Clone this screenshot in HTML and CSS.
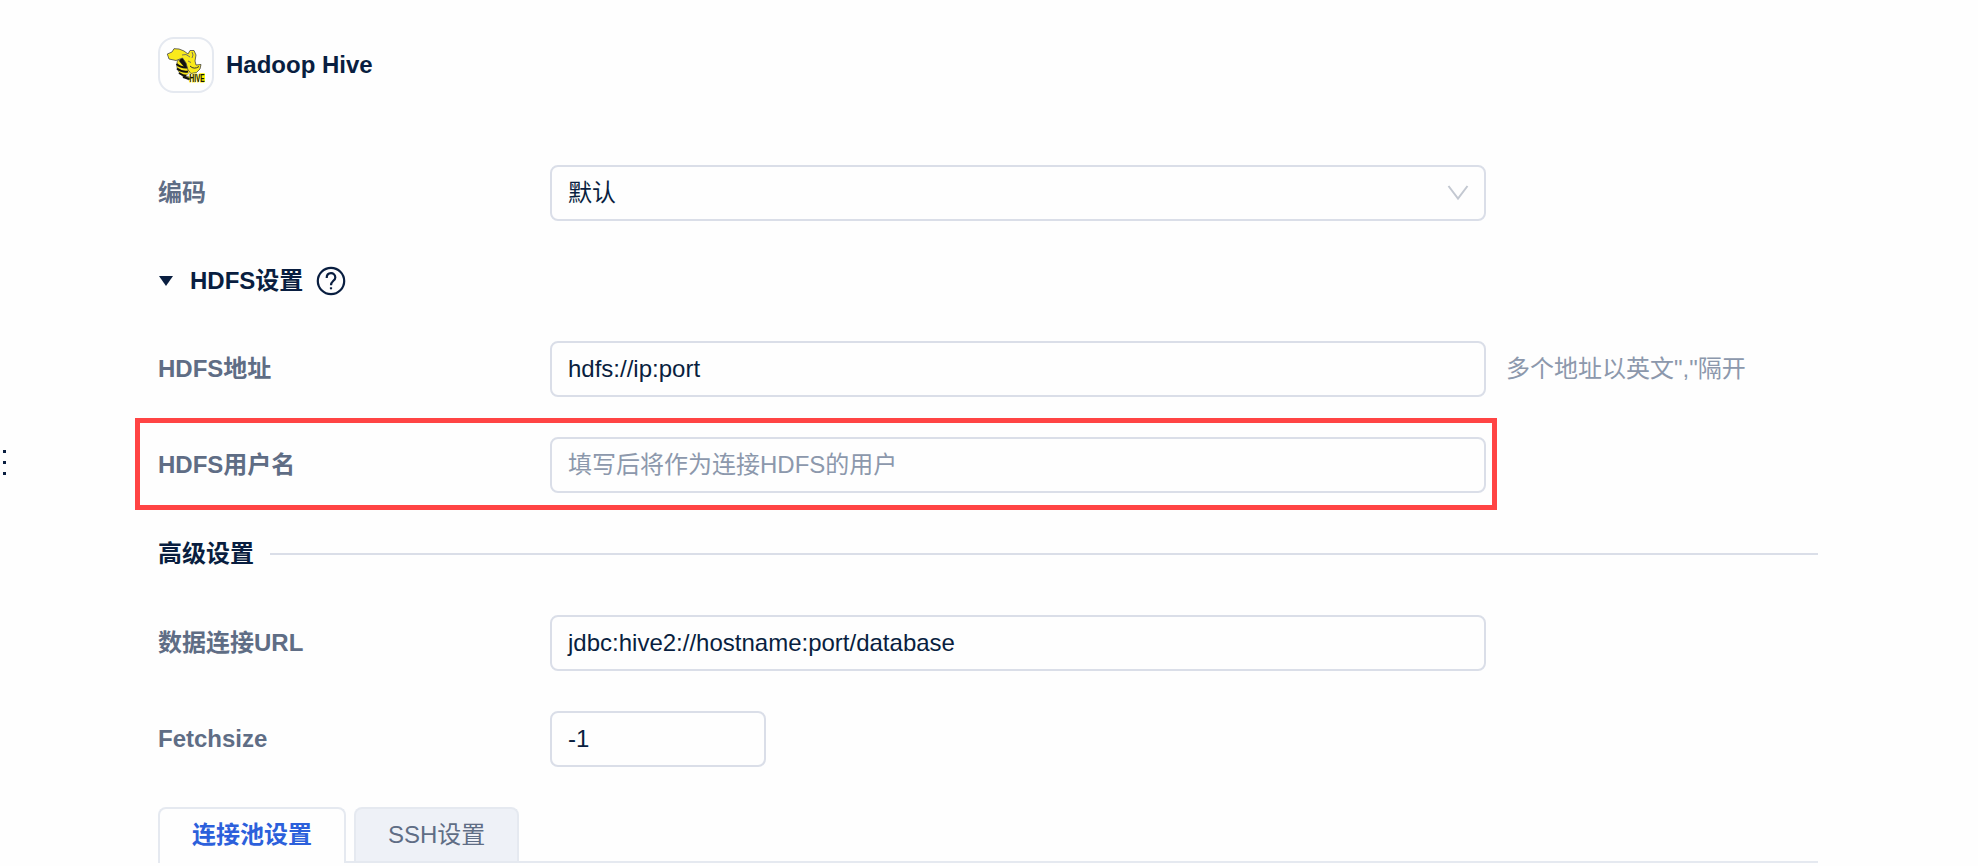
FILE: index.html
```html
<!DOCTYPE html>
<html lang="zh-CN">

<head>
    <meta charset="UTF-8">
    <meta name="viewport" content="width=device-width, initial-scale=1.0">
    <title>Hadoop Hive</title>
    <link rel="stylesheet" href="styles.css">
</head>

<body>
    <div class="page">
        <aside class="drag-bar">
            <i></i>
            <i></i>
            <i></i>
        </aside>

        <main class="form">
            <header class="header">
                <div class="logo">
                    <svg width="40" height="38" viewBox="0 0 40 38">
                        <!-- striped body -->
                        <path fill="#f5e51b" stroke="#333" stroke-width=".6" d="M12 14 C9 19 11 29 23 34 L25 27 L18 13 Z" />
                        <path fill="none" stroke="#111" stroke-width="2" d="M10.500 18 Q15 22 21 21.500 M11 22.500 Q16 26.500 22 25.500 M13 27 Q18 30.500 23 29.500 M17 31 L24 33" />
                        <path fill="#111" d="M16 11 L21 17 L22 22 L19 22 L13 15 Z" />
                        <!-- head, ears and trunk -->
                        <path fill="#f9ea1c" stroke="#444" stroke-width=".8" d="M1.300 8 L6 6 L8 2.700 L13 3 L18 5 L22 8 L24 4.500 L28 4.500 L30 9 L29 15 L30 19 L35 18.500 L34 23 L30.500 26.500 L25 27.500 L22 24 L20 17 L16.500 12 L10 14.500 L3 13 Z" />
                        <path fill="none" stroke="#666" stroke-width=".9" d="M16 9 Q20 7 24 11 M26 6 Q28 9 26 12 M22 15 L25 16.500" />
                        <path fill="none" stroke="#333" stroke-width="1" d="M24 20 Q28 24 33 20.500" />
                        <path fill="#eee" stroke="#999" stroke-width=".5" d="M20 30 L24 26 L25 31 Z" />
                        <rect x="34" y="27.500" width="5" height="8.500" fill="#fff200" />
                        <text class="logo-text" x="23.500" y="35.500" textLength="15" lengthAdjust="spacingAndGlyphs">HIVE</text>
                    </svg>
                </div>
                <h1 class="title">Hadoop Hive</h1>
            </header>

            <div class="row row-encode">
                <label class="label">编码</label>
                <div class="field select">
                    <span>默认</span>
                    <svg class="arrow" width="22" height="16" viewBox="0 0 22 16">
                        <path d="M1.500 1 L11 13.500 L20.500 1" />
                    </svg>
                </div>
            </div>

            <div class="group-title">
                <svg width="14" height="10" viewBox="0 0 14 10">
                    <path fill="#091e40" d="M0 0 H14 L7 10 Z" />
                </svg>
                <span>HDFS设置</span>
                <svg class="help" width="30" height="30" viewBox="0 0 30 30">
                    <circle cx="15" cy="15" r="13.200" />
                    <path d="M10.700 12 C10.700 5.600 19.300 5.800 19.300 11.400 C19.300 14.800 15 14.800 15 19.200" />
                    <path d="M15 21.300 V23.300" />
                </svg>
            </div>

            <div class="row">
                <label class="label">HDFS地址</label>
                <div class="field">hdfs://ip:port</div>
                <span class="hint">多个地址以英文","隔开</span>
            </div>

            <div class="row row-user">
                <label class="label">HDFS用户名</label>
                <div class="field placeholder">填写后将作为连接HDFS的用户</div>
                <div class="highlight"></div>
            </div>

            <div class="divider">
                <span>高级设置</span>
            </div>

            <div class="row">
                <label class="label">数据连接URL</label>
                <div class="field">jdbc:hive2://hostname:port/database</div>
            </div>

            <div class="row row-fetch">
                <label class="label">Fetchsize</label>
                <div class="field small">-1</div>
            </div>

            <nav class="tabs">
                <div class="tab active">连接池设置</div>
                <div class="tab">SSH设置</div>
            </nav>
        </main>
    </div>
</body>

</html>
```

FILE: styles.css
```css
* {
    margin: 0;
    padding: 0;
    box-sizing: border-box;
}

body {
    height: 866px;
    overflow: hidden;
    background-color: #fefefe;
    color: #091e40;
    font: 24px/36px "Liberation Sans", "Noto Sans CJK SC", sans-serif;
}

.page {
    display: flex;
    height: 100%;
}

.drag-bar {
    display: flex;
    flex-direction: column;
    align-items: center;
    gap: 8px;
    width: 9px;
    padding-top: 450px;
}

.drag-bar i {
    width: 3px;
    height: 3px;
    background-color: #091e40;
}

.form {
    width: 1660px;
    margin-left: 149px;
    padding-top: 37px;
}

.header {
    display: flex;
    align-items: center;
    gap: 12px;
    height: 56px;
}

.logo {
    display: flex;
    justify-content: center;
    align-items: center;
    width: 56px;
    height: 56px;
    border: 2px solid #e5e9f0;
    border-radius: 16px;
}

.logo svg {
    overflow: visible;
}

.logo-text {
    fill: #111;
    stroke: #fff200;
    stroke-width: 1px;
    paint-order: stroke;
    font: bold 10px "Liberation Sans", sans-serif;
}

.title {
    font-size: 24px;
    font-weight: 700;
}

.row {
    position: relative;
    display: flex;
    align-items: center;
    height: 56px;
}

.row-encode {
    margin-top: 72px;
}

.row-user,
.row-fetch {
    margin-top: 40px;
}

.label {
    width: 392px;
    color: #5f6d85;
    font-weight: 700;
}

.field {
    display: flex;
    align-items: center;
    width: 936px;
    height: 56px;
    padding: 0 15px 0 16px;
    border: 2px solid #dadee8;
    border-radius: 8px;
}

.field.select {
    justify-content: space-between;
}

.field.small {
    width: 216px;
}

.field.placeholder {
    color: #8c98ac;
}

.arrow path {
    fill: none;
    stroke: #c3c8d1;
    stroke-width: 2;
}

.hint {
    margin-left: 20px;
    color: #8c98ac;
}

.highlight {
    position: absolute;
    top: -19px;
    left: -23px;
    width: 1362px;
    height: 92px;
    border: 5px solid #ff4444;
}

.group-title {
    display: flex;
    align-items: center;
    height: 36px;
    margin: 42px 0;
    padding-left: 1px;
    font-weight: 700;
}

.group-title span {
    margin: 0 13px 0 17px;
}

.help {
    fill: none;
    stroke: #091e40;
    stroke-width: 2.2;
}

.divider {
    display: flex;
    align-items: center;
    gap: 16px;
    height: 36px;
    margin: 43px 0;
    font-weight: 700;
}

.divider::after {
    content: "";
    flex: 1;
    height: 2px;
    background-color: #dadee8;
}

.tabs {
    display: flex;
    gap: 8px;
    height: 56px;
    margin-top: 40px;
    box-shadow: inset 0 -2px #e5e9f0;
}

.tab {
    height: 54px;
    padding: 0 32px;
    border: 2px solid #e5e9f0;
    border-bottom: 0;
    border-radius: 8px 8px 0 0;
    background-color: #eef1f7;
    color: #5f6d85;
    line-height: 52px;
}

.tab.active {
    height: 56px;
    background-color: #fefefe;
    color: #2c60db;
    font-weight: 700;
}
```
